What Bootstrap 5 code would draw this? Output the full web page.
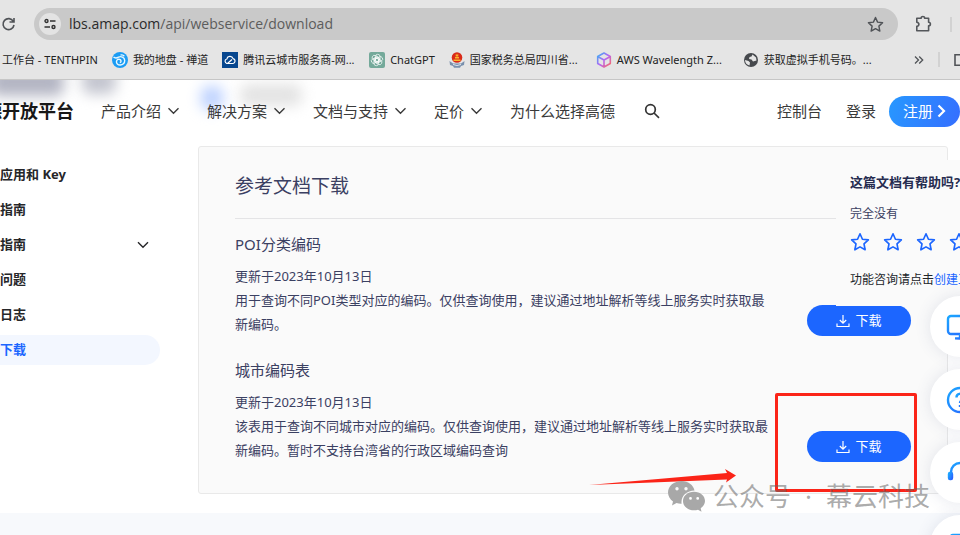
<!DOCTYPE html>
<html lang="zh-CN">
<head>
<meta charset="utf-8">
<meta name="viewport" content="width=device-width, initial-scale=1">
<title>相关下载 - 开放平台</title>
<link href="https://cdn.jsdelivr.net/npm/bootstrap@5.3.0/dist/css/bootstrap.min.css" rel="stylesheet">
<style>
  html, body { height: 100%; }
  body { font-family: "Noto Sans", "Noto Sans CJK SC", sans-serif; color: #3b4062; background: #f7f9fc; overflow: hidden; }
  button { font-family: inherit; }
  svg { display: block; flex: none; }
  a { text-decoration: none; }

  /* browser chrome */
  .chrome { background: #e5e5e5; border-bottom: 1px solid #c6c6c6; padding-top: 8px; position: relative; z-index: 3; }
  .omnibox { background: #c9c9c9; border-radius: 16px; height: 32px; margin-left: 18px; padding: 0 14px 0 5px; }
  .site-info { width: 22px; height: 22px; background: #e3e3e3; }
  .url-field { background: transparent; color: #5c5c5c; font: 14px/20px "Open Sans", sans-serif; }
  .url-field b { color: #2b2b2b; font-weight: 400; }
  .reload-icon, .omni-star { color: #505357; }
  .bookmarks { height: 39px; font-size: 11px; gap: 14px; padding-left: 2px; }
  .bookmarks a { color: #222; gap: 5px; line-height: 16px; }
  .bookmarks .wide-mark { width: 133px; }
  .thin-sep { width: 2px; height: 15px; background: #d2d2d2; }

  /* site navigation */
  .site-nav { height: 62px; background: #fff; position: relative; overflow: hidden; font-size: 15px; }
  .site-nav a, .site-nav button { color: #3a3a3a; position: relative; }
  .logo-text { font-size: 18px; font-weight: 700; margin-left: -16px; width: 117px; white-space: nowrap; }
  .site-nav .logo-text { color: #181818; }
  .menu-link { gap: 6px; margin-right: 27px; white-space: nowrap; }
  .login-link { margin-right: 13px; }
  .site-nav .signup { height: 31px; width: 71px; border-radius: 16px; color: #fff; background: linear-gradient(110deg, #2798ff, #356eff); gap: 4px; }
  .haze { position: absolute; filter: blur(7px); border-radius: 8px; }
  .haze-a { left: -10px; top: -12px; width: 74px; height: 28px; background: #b3b5c3; }
  .haze-b { left: 201px; top: 6px; width: 22px; height: 24px; background: #bcd1ff; }
  .haze-c { left: 240px; top: 4px; width: 62px; height: 22px; background: #e3e3e3; }
  .haze-d { left: 82px; top: -12px; width: 34px; height: 26px; background: #c3c5cf; }

  /* page body */
  .page { background: #fff; padding: 4px 12px 19px 0; position: relative; }
  .side { width: 160px; margin-right: 38px; padding-top: 14px; font-size: 13px; font-weight: 700; }
  .side a { color: #262629; height: 30px; margin-bottom: 5px; border-radius: 0 15px 15px 0; padding-right: 11px; }
  .side a.current { color: #1c66ff; background: #f3f7ff; }
  .downloads { background: #fafafa; border: 1px solid #e9e9e9; border-radius: 3px; padding: 26px 36px 30px; min-width: 0; }
  .downloads h1 { font-size: 19px; line-height: 26px; padding-bottom: 19px; border-bottom: 1px solid #e4e4e6; margin: 0 0 13px; font-weight: 400; }
  .downloads h2 { font-size: 15px; line-height: 24px; margin: 0 0 8px; font-weight: 400; }
  .entry { margin-bottom: 22px; }
  .entry p { font-size: 13px; line-height: 24px; margin: 0; white-space: nowrap; }
  .entry:last-child { margin-bottom: 1px; }
  .get { width: 104px; height: 31px; border-radius: 16px; background: #1c66ff; color: #fff; font-size: 13px; gap: 5px; }

  /* overlays */
  .feedback { position: absolute; right: 0; top: 18px; width: 124px; height: 146px; padding: 12px 0 0 14px; background: #fafafa; overflow: hidden; white-space: nowrap; font-size: 12px; line-height: 20px; }
  .feedback h3 { font-size: 13px; line-height: 20px; font-weight: 700; margin: 0 0 12px; color: #262c50; }
  .feedback .rate { gap: 13px; margin: 8px 0 18px; }
  .feedback a, .feedback .rate button { color: #1c66ff; }
  .floaters { position: absolute; right: -30px; top: 154px; gap: 12px; z-index: 2; }
  .floaters button { width: 60px; height: 61px; background: #fff; box-shadow: 0 0 16px rgba(60, 80, 120, .13); }
  .callout { position: absolute; right: 43px; top: 251px; width: 142px; height: 99px; border: 3px solid #fb2418; border-radius: 2px; }
  .arrow { position: absolute; right: 223px; top: 325px; }
  .credit { position: absolute; right: 30px; top: 334px; font-size: 26px; line-height: 40px; color: rgba(100, 100, 100, .55); gap: 14px; white-space: nowrap; }
  .credit-name { gap: 8px; }
</style>
<script src="https://cdn.jsdelivr.net/npm/bootstrap@5.3.0/dist/js/bootstrap.bundle.min.js"></script>
</head>
<body>
<svg width="0" height="0" class="position-absolute" aria-hidden="true">
  <defs>
    <linearGradient id="lgBlue" x1="0" y1="0" x2="1" y2="1"><stop offset="0" stop-color="#1ba7ff"/><stop offset="1" stop-color="#2a63ff"/></linearGradient>
    <linearGradient id="lgCube" x1="0" y1="0" x2="1" y2="1"><stop offset="0" stop-color="#35b4f2"/><stop offset=".5" stop-color="#b465f5"/><stop offset="1" stop-color="#ff6a5c"/></linearGradient>
    <symbol id="chev" viewBox="0 0 12 8"><path d="M1 1.2l5 5 5-5" fill="none" stroke="currentColor" stroke-width="1.4"/></symbol>
    <symbol id="star" viewBox="0 0 18 18"><path d="M9 1.6l2.2 4.9 5.3.6-3.9 3.6 1 5.3L9 13.4 4.4 16l1-5.3L1.5 7.1l5.3-.6z" fill="none" stroke="currentColor" stroke-width="1.5" stroke-linejoin="round"/></symbol>
    <symbol id="down" viewBox="0 0 14 14"><path d="M7 1v8M3.8 6L7 9.2 10.2 6M1 9.5V12.5h12V9.5" fill="none" stroke="currentColor" stroke-width="1.2"/></symbol>
  </defs>
</svg>

<header class="chrome">
  <div class="d-flex align-items-center">
    <button class="btn p-0 border-0 reload-icon" aria-label="刷新"><svg width="16" height="16" viewBox="0 0 16 16"><path d="M13.3 5.3A5.5 5.5 0 1 0 14 9M14 2v4h-4.5" fill="none" stroke="currentColor" stroke-width="1.6"/></svg></button>
    <div class="omnibox d-flex align-items-center flex-grow-1">
      <button class="btn p-0 border-0 site-info rounded-circle d-flex align-items-center justify-content-center" aria-label="网站信息"><svg width="12" height="12" viewBox="0 0 12 12" fill="none" stroke="#333" stroke-width="1.4"><circle cx="2.5" cy="3" r="1.5"/><path d="M6 3h5.500M.5 9H6"/><circle cx="9.5" cy="9" r="1.5"/></svg></button>
      <a href="#" class="url-field flex-grow-1 ms-2"><b>lbs.amap.com</b>/api/webservice/download</a>
      <button class="btn p-0 border-0 omni-star" aria-label="收藏"><svg width="17" height="17"><use href="#star"/></svg></button>
    </div>
    <button class="btn p-0 border-0 ms-3" aria-label="扩展程序"><svg width="20" height="18" viewBox="0 0 20 18"><path d="M2.800 3.200H7.200C7 1 10.800 1 10.600 3.200H14.600V7.200C17 7.200 17 10.800 14.600 10.800V15.800H2.800V11.400C5.600 11 5.600 7.600 2.800 7.200z" fill="none" stroke="#54575b" stroke-width="1.6" stroke-linejoin="round"/></svg></button>
    <span class="thin-sep ms-3 me-2"></span>
  </div>
  <nav class="bookmarks d-flex align-items-center" aria-label="书签栏">
    <a href="#" class="text-nowrap">工作台 - TENTHPIN</a>
    <a href="#" class="d-flex align-items-center text-nowrap"><svg width="16" height="16" viewBox="0 0 16 16"><circle cx="8" cy="8" r="8" fill="#1b9cf4"/><path d="M1.500 5c2 1.800 3.500 1 5 .2 2.500-1.400 6 0 6.200 3.200.1 2.800-2 4.600-4.500 4.600-2.400 0-4-1.600-3.700-3.600.3-1.800 2.300-2.700 3.700-1.800 1.300.9 1 2.700-.4 2.900M8.500 3.200c1.500-.6 3 0 3.800 1" fill="none" stroke="#e8f8ff" stroke-width="1.400"/></svg>我的地盘 - 禅道</a>
    <a href="#" class="d-flex align-items-center text-nowrap wide-mark"><svg width="16" height="16" viewBox="0 0 16 16"><path fill="#07478f" d="M0 0h16v16H0z"/><path d="M5 11.500a2.300 2.300 0 0 1-.2-4.500 3.300 3.300 0 0 1 6.300-.4A2.500 2.500 0 0 1 11 11.500H5.500L10 7.500" fill="none" stroke="#fff" stroke-width="1.200"/></svg>腾讯云城市服务商-网...</a>
    <a href="#" class="d-flex align-items-center text-nowrap"><svg width="16" height="16" viewBox="0 0 16 16"><rect width="16" height="16" rx="2" fill="#74a99a"/><g fill="none" stroke="#fff" stroke-width=".7"><rect x="6.500" y="2.300" width="4.500" height="8" rx="2.200"/><rect x="6.500" y="2.300" width="4.500" height="8" rx="2.200" transform="rotate(60 8 8)"/><rect x="6.500" y="2.300" width="4.500" height="8" rx="2.200" transform="rotate(120 8 8)"/><rect x="6.500" y="2.300" width="4.500" height="8" rx="2.200" transform="rotate(180 8 8)"/><rect x="6.500" y="2.300" width="4.500" height="8" rx="2.200" transform="rotate(240 8 8)"/><rect x="6.500" y="2.300" width="4.500" height="8" rx="2.200" transform="rotate(300 8 8)"/></g></svg>ChatGPT</a>
    <a href="#" class="d-flex align-items-center text-nowrap wide-mark"><svg width="16" height="16" viewBox="0 0 16 16"><path d="M.5 9l3.500 2.500h8L15.500 9l-.5 4-3 1-1 1.800H5L4 14l-3-1z" fill="#7990ad"/><circle cx="8" cy="5.500" r="5.300" fill="#d92a19"/><path d="M4.500 7.500h7v1.500h-7zM6 5h4v1.500H6zM8 1.500l.6 1.300H10L9 3.700l.3 1.200L8 4.200l-1.300.7.300-1.200-1-.9h1.400z" fill="#f9b42b"/><path d="M4 12.500q4 2 8 0" stroke="#dfe6ef" fill="none"/></svg>国家税务总局四川省...</a>
    <a href="#" class="d-flex align-items-center text-nowrap wide-mark"><svg width="16" height="16" viewBox="0 0 16 16"><path d="M8 1l6.300 3.500v7L8 15l-6.300-3.500v-7zM2 4.700l6 3.300 6-3.300M8 8v7" fill="none" stroke="url(#lgCube)" stroke-width="1.600" stroke-linejoin="round"/></svg>AWS Wavelength Z...</a>
    <a href="#" class="d-flex align-items-center text-nowrap wide-mark"><svg width="16" height="16" viewBox="0 0 16 16"><circle cx="8" cy="8" r="7" fill="#46494d"/><path d="M9.500 2.500l-1 2-2 .5-.5 2 2.500.5 1.500 2 3.500-1-.5-3zM2 8l3.500 1 1.500 1.500-.5 3C4 13 2 11 2 8z" fill="#e5e5e5"/></svg>获取虚拟手机号码。...</a>
    <button class="btn p-0 border-0 ms-auto" aria-label="更多书签"><svg width="10" height="10" viewBox="0 0 10 10"><path d="M1 1.500L4.500 5 1 8.500M5.200 1.500L8.700 5 5.200 8.500" fill="none" stroke="#505357" stroke-width="1.300"/></svg></button>
    <span class="thin-sep"></span>
    <svg width="6" height="12" viewBox="0 0 6 12"><path d="M6 .8H1V11.200h5" fill="none" stroke="#505357" stroke-width="1.600"/></svg>
  </nav>
</header>

<nav class="site-nav d-flex align-items-center" aria-label="主导航">
  <span class="haze haze-a"></span><span class="haze haze-d"></span><span class="haze haze-b"></span><span class="haze haze-c"></span>
  <a href="#" class="logo-text">德开放平台</a>
  <a href="#" class="menu-link d-flex align-items-center">产品介绍<svg width="13" height="8"><use href="#chev"/></svg></a>
  <a href="#" class="menu-link d-flex align-items-center">解决方案<svg width="13" height="8"><use href="#chev"/></svg></a>
  <a href="#" class="menu-link d-flex align-items-center">文档与支持<svg width="13" height="8"><use href="#chev"/></svg></a>
  <a href="#" class="menu-link d-flex align-items-center">定价<svg width="13" height="8"><use href="#chev"/></svg></a>
  <a href="#" class="menu-link">为什么选择高德</a>
  <button class="btn p-0 border-0" aria-label="搜索"><svg width="18" height="16" viewBox="0 0 18 16"><g fill="none" stroke="#333" stroke-width="1.700"><circle cx="8.500" cy="6.500" r="4.800"/><path d="M12 10l5 4.800"/></g></svg></button>
  <a href="#" class="ms-auto text-nowrap">控制台</a>
  <a href="#" class="text-nowrap ms-4 login-link">登录</a>
  <a href="#" class="signup d-flex align-items-center justify-content-center text-nowrap">注册<svg width="9" height="14" viewBox="0 0 9 14"><path d="M1.500 1.500L7 7l-5.500 5.500" fill="none" stroke="#fff" stroke-width="2.200"/></svg></a>
</nav>

<main class="page d-flex">
  <nav class="side d-flex flex-column flex-shrink-0" aria-label="文档目录">
    <a href="#" class="d-flex align-items-center">应用和 Key</a>
    <a href="#" class="d-flex align-items-center">指南</a>
    <a href="#" class="d-flex align-items-center justify-content-between">指南<svg width="12" height="8"><use href="#chev"/></svg></a>
    <a href="#" class="d-flex align-items-center">问题</a>
    <a href="#" class="d-flex align-items-center">日志</a>
    <a href="#" class="d-flex align-items-center current" aria-current="page">下载</a>
  </nav>

  <section class="downloads flex-grow-1">
    <h1>参考文档下载</h1>
    <article class="entry">
      <h2>POI分类编码</h2>
      <div class="d-flex align-items-end justify-content-between">
        <p>更新于2023年10月13日<br>用于查询不同POI类型对应的编码。仅供查询使用，建议通过地址解析等线上服务实时获取最<br>新编码。</p>
        <button class="btn p-0 border-0 get d-flex align-items-center justify-content-center flex-shrink-0"><svg width="14" height="14"><use href="#down"/></svg>下载</button>
      </div>
    </article>
    <article class="entry">
      <h2>城市编码表</h2>
      <div class="d-flex align-items-end justify-content-between">
        <p>更新于2023年10月13日<br>该表用于查询不同城市对应的编码。仅供查询使用，建议通过地址解析等线上服务实时获取最<br>新编码。暂时不支持台湾省的行政区域编码查询</p>
        <button class="btn p-0 border-0 get d-flex align-items-center justify-content-center flex-shrink-0"><svg width="14" height="14"><use href="#down"/></svg>下载</button>
      </div>
    </article>
  </section>

  <aside class="feedback">
    <h3>这篇文档有帮助吗?</h3>
    <div>完全没有</div>
    <div class="rate d-flex">
      <button class="btn p-0 border-0" aria-label="1 星"><svg width="20" height="20"><use href="#star"/></svg></button>
      <button class="btn p-0 border-0" aria-label="2 星"><svg width="20" height="20"><use href="#star"/></svg></button>
      <button class="btn p-0 border-0" aria-label="3 星"><svg width="20" height="20"><use href="#star"/></svg></button>
      <button class="btn p-0 border-0" aria-label="4 星"><svg width="20" height="20"><use href="#star"/></svg></button>
    </div>
    <div class="text-dark">功能咨询请点击<a href="#">创建工单</a></div>
  </aside>

  <div class="floaters d-flex flex-column">
    <button class="btn border-0 rounded-circle p-0 d-flex align-items-center justify-content-center" aria-label="控制台"><svg width="28" height="28" viewBox="0 0 28 28" fill="none" stroke="url(#lgBlue)" stroke-width="2.400"><rect x="2" y="3" width="24" height="18" rx="3"/><path d="M14 21v4.500M9 25.400l10 .1"/></svg></button>
    <button class="btn border-0 rounded-circle p-0 d-flex align-items-center justify-content-center" aria-label="帮助"><svg width="28" height="28" viewBox="0 0 28 28" fill="none" stroke="url(#lgBlue)" stroke-width="2.400"><circle cx="14" cy="14" r="12"/><path d="M10.500 11.500a3.500 3.500 0 1 1 5 3c-1 .6-1.500 1-1.500 2.500M14 19v2"/></svg></button>
    <button class="btn border-0 rounded-circle p-0 d-flex align-items-center justify-content-center" aria-label="客服"><svg width="28" height="28" viewBox="0 0 28 28" fill="none" stroke="url(#lgBlue)" stroke-width="2.400"><path d="M5 15v-2a9 9 0 0 1 18 0v2"/><rect x="3" y="14" width="3" height="6" rx="1" fill="#2687ff"/><rect x="22" y="14" width="3" height="6" rx="1" fill="#2687ff"/></svg></button>
    <button class="btn border-0 rounded-circle p-0 d-flex align-items-center justify-content-center" aria-label="文档"><svg width="28" height="28" viewBox="0 0 28 28" fill="none" stroke="url(#lgBlue)" stroke-width="2.400"><rect x="4" y="3" width="20" height="22" rx="3"/><path d="M9 10h10M9 16h10.100"/></svg></button>
  </div>

  <div class="callout"></div>
  <svg class="arrow" width="148" height="20" viewBox="0 0 148 20"><path d="M0 18L138 6 136 2 147 8.500 137 15.500 138 12.500z" fill="#fb2418"/></svg>
  <div class="credit d-flex align-items-center">
    <span class="credit-name d-flex align-items-center"><svg width="37" height="31" viewBox="0 0 37 31"><path fill="#a8a8a8" fill-rule="evenodd" d="M13.500 0C6 0 0 5 0 11.500c0 3.600 2 6.800 5 9L4 24.500l4.500-2.500c1.600.5 3.400.8 5.100.7C12.500 15.500 18.500 9.500 26.500 9.500 25.500 4 20 0 13.500 0zM9 6a1.700 1.700 0 1 1 0 3.400A1.700 1.700 0 0 1 9 6zm9 0a1.700 1.700 0 1 1 0 3.400A1.700 1.700 0 0 1 18 6zM26 10.700c-6.200 0-11 4-11 9.300s4.800 9.300 11 9.300c1.400 0 2.800-.2 4-.6l3.500 2-.8-3.500c2.600-1.700 4.300-4.300 4.300-7.200 0-5.300-4.800-9.300-11-9.300zM22.500 16a1.400 1.400 0 1 1 0 2.800 1.400 1.400 0 0 1 0-2.800zm7.200 0a1.400 1.400 0 1 1 0 2.800 1.400 1.400 0 0 1 0-2.800z"/></svg>公众号</span><span>·</span><span>幕云科技</span>
  </div>
</main>
</body>
</html>
